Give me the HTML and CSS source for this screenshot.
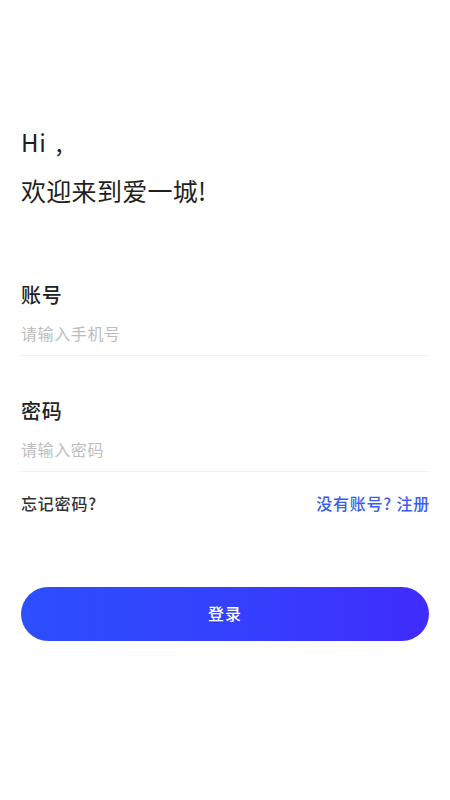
FILE: index.html
```html
<!DOCTYPE html>
<html lang="zh-CN">
<head>
<meta charset="utf-8">
<meta name="viewport" content="width=device-width, initial-scale=1">
<title>登录</title>
<link rel="stylesheet" href="styles.css">
</head>
<body>
<main class="page">
  <h1 class="greeting">
    <span class="greeting-line greeting-hi">Hi ,</span>
    <span class="greeting-line">欢迎来到爱一城!</span>
  </h1>
  <form class="form">
    <label class="field">
      <span class="field-label">账号</span>
      <input class="field-input" type="text" placeholder="请输入手机号">
    </label>
    <label class="field field-second">
      <span class="field-label">密码</span>
      <input class="field-input" type="password" placeholder="请输入密码">
    </label>
    <div class="links">
      <a class="link-forgot">忘记密码?</a>
      <a class="link-register">没有账号? 注册</a>
    </div>
    <button class="submit" type="button">登录</button>
  </form>
</main>
</body>
</html>
```
FILE: styles.css
```css
html, body {
  margin: 0;
  padding: 0;
  background: #ffffff;
}
body {
  font-family: "Noto Sans CJK SC", "Noto Sans", sans-serif;
  color: #222222;
}
.page {
  padding: 118px 21px 0 21px;
}
.greeting {
  margin: 0;
  font-size: 25px;
  font-weight: 400;
  line-height: 48px;
  color: #1f1f1f;
}
.greeting-line {
  display: block;
  letter-spacing: 0.3px;
}
.greeting-hi {
  font-size: 24px;
  letter-spacing: 0.8px;
  word-spacing: 3px;
}
.form {
  margin-top: 66px;
}
.field {
  display: block;
}
.field-second {
  margin-top: 40px;
}
.field-label {
  display: block;
  font-size: 20px;
  font-weight: 500;
  line-height: 29px;
  color: #222222;
  letter-spacing: 0.8px;
}
.field-input {
  display: block;
  box-sizing: border-box;
  width: 100%;
  margin: 0;
  padding: 12px 0 11px 0;
  border: none;
  border-bottom: 1px solid #f1f1f1;
  outline: none;
  background: transparent;
  font-family: "Noto Sans CJK SC", "Noto Sans", sans-serif;
  font-size: 16px;
  line-height: 23px;
  height: 47px;
  letter-spacing: 0.6px;
  color: #333333;
}
.field-input::placeholder {
  color: #bdbdbd;
}
.links {
  display: flex;
  justify-content: space-between;
  align-items: center;
  margin-top: 20px;
  font-size: 16px;
  line-height: 23px;
  letter-spacing: 0.8px;
}
.link-forgot {
  color: #333333;
  font-weight: 500;
}
.link-register {
  color: #3b5cf3;
  font-weight: 500;
  margin-right: -1px;
}
.submit {
  display: block;
  width: 100%;
  height: 54px;
  margin-top: 72px;
  border: none;
  border-radius: 27px;
  background: linear-gradient(90deg, #2d4ffc 0%, #3441fd 50%, #412cfd 100%);
  color: #ffffff;
  font-family: "Noto Sans CJK SC", "Noto Sans", sans-serif;
  font-size: 16px;
  font-weight: 500;
  letter-spacing: 1px;
  padding: 0 0 3px 0;
}
```
